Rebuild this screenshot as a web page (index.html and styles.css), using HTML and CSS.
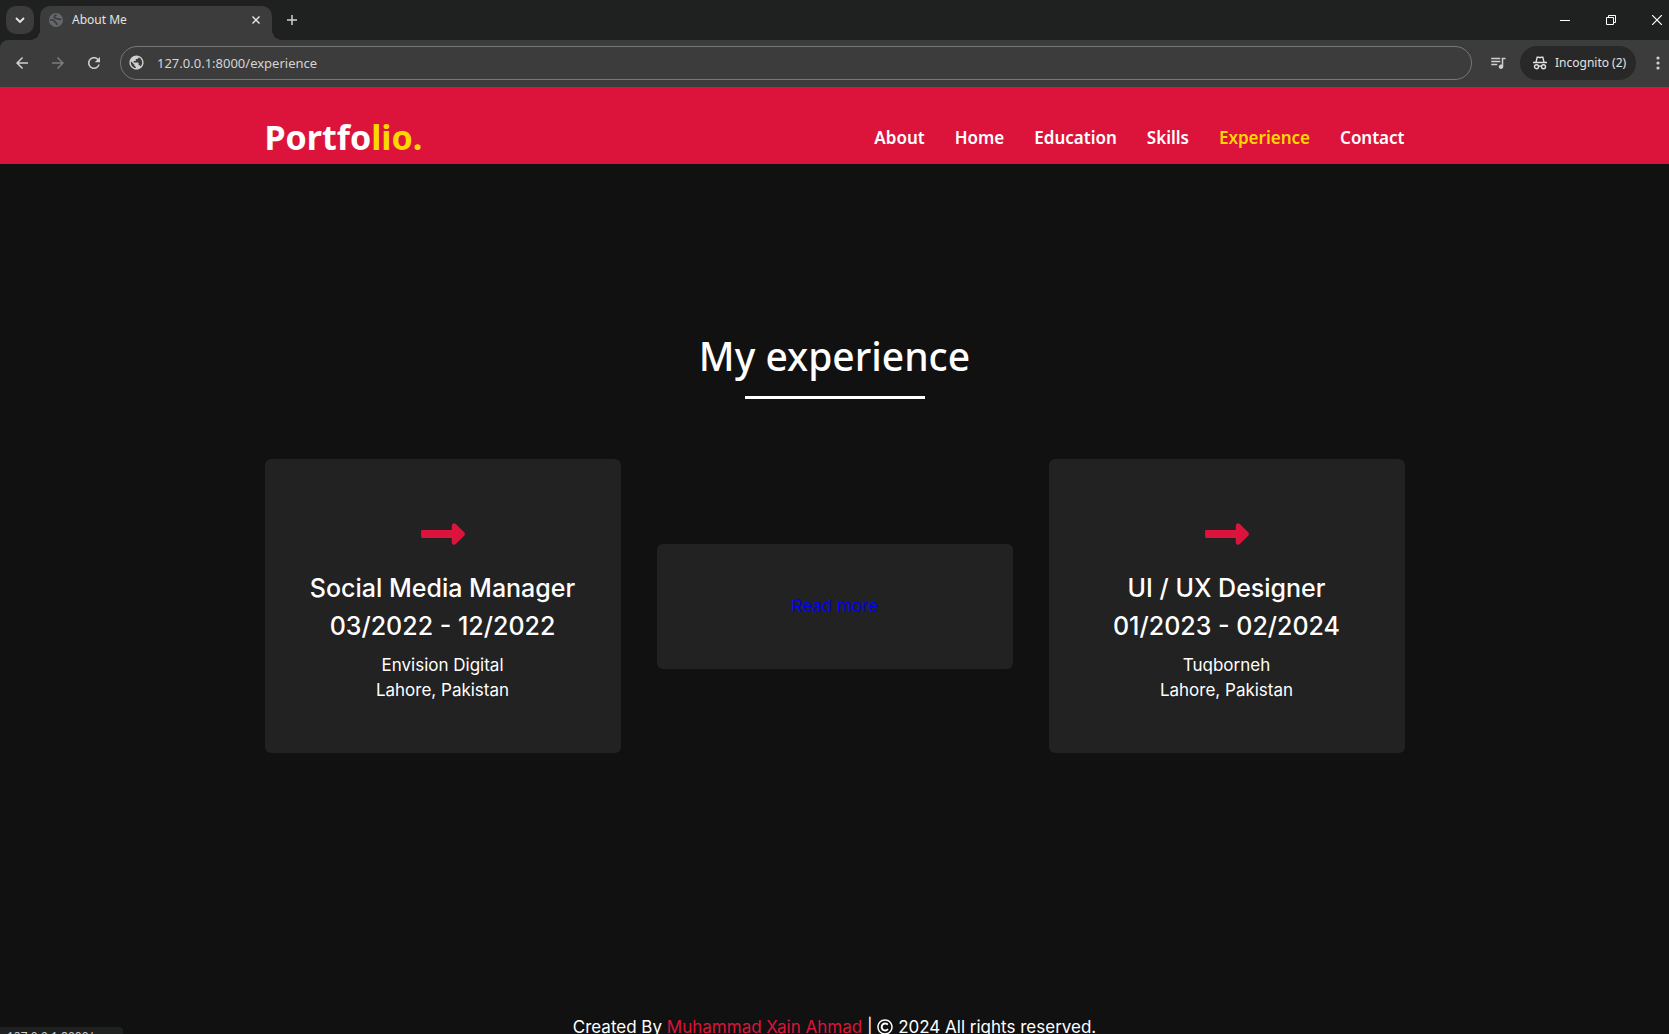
FILE: index.html
```html
<!DOCTYPE html>
<html lang="en">
<head>
<meta charset="utf-8">
<meta name="viewport" content="width=device-width, initial-scale=1">
<title>About Me</title>
<link rel="stylesheet" href="styles.css">
</head>
<body>
<div class="browser">
  <div class="tab-strip">
    <button class="tab-search" type="button" aria-label="Search tabs">
      <svg width="12" height="12" viewBox="0 0 12 12"><path d="M2 4l4 4 4-4" fill="none" stroke="#e8e8e8" stroke-width="1.800"/></svg>
    </button>
    <div class="tab">
      <svg width="14" height="14" viewBox="0 0 14 14"><circle cx="7" cy="7" r="7" fill="#64676c"/><path d="M7.500 1.800C4.500 2.500 4.500 5 7 5.500s4.500.2 5.200 1.300M1.200 7.200c2.300-.4 4.300 0 4.600 1.500s2.200.8 2.200 3.200" fill="none" stroke="#3c3c3c" stroke-width="1.700"/></svg>
      <span class="tab-title">About Me</span>
      <button class="icon-button tab-close" type="button" aria-label="Close tab">
        <svg width="8" height="8" viewBox="0 0 8 8"><path d="M.5.500l7 7M7.500.500l-7 7" stroke="#e8e8e8" stroke-width="1.400"/></svg>
      </button>
    </div>
    <button class="icon-button new-tab" type="button" aria-label="New tab">
      <svg width="10" height="10" viewBox="0 0 10 10"><path d="M5 0v10M0 5h10" stroke="#d0d0d0" stroke-width="1.500"/></svg>
    </button>
    <div class="window-buttons">
      <button class="icon-button" type="button" aria-label="Minimize"><svg width="10" height="10" viewBox="0 0 10 10"><path d="M0 5.500h10" stroke="#fff"/></svg></button>
      <button class="icon-button" type="button" aria-label="Restore"><svg width="10" height="10" viewBox="0 0 10 10"><path d="M.5 2.500h7v7h-7zM2.500 2.500v-2h7v7h-2" fill="none" stroke="#fff"/></svg></button>
      <button class="icon-button" type="button" aria-label="Close"><svg width="10" height="10" viewBox="0 0 10 10"><path d="M0 0l10 10M10 0L0 10" stroke="#fff" stroke-width="1.200"/></svg></button>
    </div>
  </div>
  <div class="toolbar">
    <div class="nav-buttons">
      <button class="icon-button" type="button" aria-label="Back"><svg width="18" height="18" viewBox="0 0 24 24"><path fill="#d0d0d0" d="M20 11H7.830l5.590-5.590L12 4l-8 8 8 8 1.410-1.410L7.830 13H20v-2z"/></svg></button>
      <button class="icon-button" type="button" aria-label="Forward"><svg width="18" height="18" viewBox="0 0 24 24"><path fill="#7c7c7c" d="M4 11h12.170l-5.590-5.590L12 4l8 8-8 8-1.410-1.410L16.170 13H4v-2z"/></svg></button>
      <button class="icon-button" type="button" aria-label="Reload"><svg width="18" height="18" viewBox="0 0 24 24"><path fill="#d0d0d0" d="M17.650 6.350C16.200 4.900 14.210 4 12 4c-4.420 0-7.990 3.580-7.990 8s3.570 8 7.990 8c3.730 0 6.840-2.550 7.730-6h-2.080c-.82 2.330-3.040 4-5.650 4-3.310 0-6-2.690-6-6s2.690-6 6-6c1.660 0 3.140.69 4.220 1.780L13 11h7V4l-2.350 2.350z"/></svg></button>
    </div>
    <label class="address">
      <svg width="17" height="17" viewBox="0 0 24 24"><path fill="#d0d0d0" d="M12 2C6.480 2 2 6.480 2 12s4.480 10 10 10 10-4.480 10-10S17.520 2 12 2zm-1 17.930c-3.950-.49-7-3.850-7-7.930 0-.62.08-1.210.21-1.790L9 15v1c0 1.100.9 2 2 2v1.930zm6.900-2.540c-.26-.81-1-1.390-1.900-1.390h-1v-3c0-.55-.45-1-1-1H8v-2h2c.55 0 1-.45 1-1V7h2c1.100 0 2-.9 2-2v-.41c2.930 1.190 5 4.060 5 7.410 0 2.080-.8 3.970-2.100 5.390z"/></svg>
      <input type="text" value="127.0.0.1:8000/experience" aria-label="Address">
    </label>
    <button class="icon-button media" type="button" aria-label="Media controls"><svg width="18" height="18" viewBox="0 0 24 24"><path fill="#d0d0d0" d="M15 5H3v2h12V5zm0 4H3v2h12V9zM3 15h8v-2H3v2zM17 5v9.180c-.31-.11-.65-.18-1-.18-1.660 0-3 1.340-3 3s1.340 3 3 3 3-1.340 3-3V7h3V5h-5z"/></svg></button>
    <button class="incognito" type="button">
      <svg width="14" height="14" viewBox="0 0 14 14" fill="none" stroke="#e0e0e0" stroke-width="1.400"><path d="M0 6.500h14M3 6.200l1.200-5h1.500l1.300.5 1.300-.5h1.500l1.200 5"/><circle cx="3.500" cy="10.700" r="2"/><circle cx="10.500" cy="10.700" r="2"/><path d="M5.500 10.300q1.500-.8 3 0"/></svg>
      <span>Incognito (2)</span>
    </button>
    <button class="icon-button menu" type="button" aria-label="Menu"><svg width="4" height="14" viewBox="0 0 4 14" fill="#d0d0d0"><circle cx="2" cy="2" r="1.600"/><circle cx="2" cy="7" r="1.600"/><circle cx="2" cy="12" r="1.600"/></svg></button>
  </div>
</div>

<header class="navbar">
  <div class="container navbar-row">
    <a class="logo" href="#">Portfo<span>lio.</span></a>
    <nav>
      <ul class="menu-list">
        <li><a href="#">About</a></li>
        <li><a href="#">Home</a></li>
        <li><a href="#">Education</a></li>
        <li><a href="#">Skills</a></li>
        <li><a class="active" href="#">Experience</a></li>
        <li><a href="#">Contact</a></li>
      </ul>
    </nav>
  </div>
</header>

<main class="experience">
  <div class="container">
    <h1 class="title">My experience</h1>
    <div class="cards">
      <article class="card">
        <svg class="arrow" width="44" height="50" viewBox="0 0 448 512"><path d="M313.941 216H12c-6.627 0-12 5.373-12 12v56c0 6.627 5.373 12 12 12h301.941v46.059c0 21.382 25.851 32.090 40.971 16.971l86.059-86.059c9.373-9.373 9.373-24.569 0-33.941l-86.059-86.059c-15.119-15.119-40.971-4.411-40.971 16.971V216z"/></svg>
        <h2>Social Media Manager<br>03/2022 - 12/2022</h2>
        <p>Envision Digital<br>Lahore, Pakistan</p>
      </article>
      <article class="card">
        <a class="read-more" href="#">Read more</a>
      </article>
      <article class="card">
        <svg class="arrow" width="44" height="50" viewBox="0 0 448 512"><path d="M313.941 216H12c-6.627 0-12 5.373-12 12v56c0 6.627 5.373 12 12 12h301.941v46.059c0 21.382 25.851 32.090 40.971 16.971l86.059-86.059c9.373-9.373 9.373-24.569 0-33.941l-86.059-86.059c-15.119-15.119-40.971-4.411-40.971 16.971V216z"/></svg>
        <h2>UI / UX Designer<br>01/2023 - 02/2024</h2>
        <p>Tuqborneh<br>Lahore, Pakistan</p>
      </article>
    </div>
  </div>
</main>

<footer class="footer">Created By <a href="#">Muhammad Xain Ahmad</a> | <svg class="copyright" width="16" height="16" viewBox="0 0 512 512"><path d="M256 8C119.033 8 8 119.033 8 256s111.033 248 248 248 248-111.033 248-248S392.967 8 256 8zm0 448c-110.532 0-200-89.451-200-200 0-110.531 89.451-200 200-200 110.532 0 200 89.451 200 200 0 110.532-89.451 200-200 200zm107.351-101.064c-9.614 9.712-45.530 41.396-104.065 41.396-82.430 0-140.484-61.425-140.484-141.567 0-79.152 60.275-139.401 139.762-139.401 55.531 0 88.738 26.620 97.593 34.779a11.965 11.965 0 0 1 1.936 15.322l-18.155 28.113c-3.841 5.950-11.966 7.282-17.499 2.921-8.595-6.776-31.814-22.538-61.708-22.538-48.303 0-77.916 35.330-77.916 80.082 0 41.589 26.888 83.692 78.277 83.692 32.657 0 56.843-19.039 65.726-27.225 5.270-4.857 13.596-4.039 17.820 1.738l19.865 27.170a11.947 11.947 0 0 1-1.152 15.518z"/></svg> 2024 All rights reserved.</footer>

<div class="status-bubble">127.0.0.1:8000/</div>
</body>
</html>
```
FILE: styles.css
```css
* {
  box-sizing: border-box;
  margin: 0;
  padding: 0;
}

body {
  position: relative;
  height: 100vh;
  overflow: hidden;
  background: #111;
  color: #fff;
  font: 17px/25px Inter, sans-serif;
}

a {
  text-decoration: none;
}

button {
  border: 0;
  background: none;
  color: inherit;
  font: inherit;
}

svg {
  flex: none;
}

/* Browser frame */
.browser {
  font: 13px/20px "Noto Sans", sans-serif;
  color: #e3e3e3;
  background: #1f2120;
}

.tab-strip {
  display: flex;
  align-items: center;
  height: 40px;
  padding-left: 6px;
}

.icon-button {
  display: grid;
  place-items: center;
  flex: none;
}

.tab-search {
  display: grid;
  place-items: center;
  width: 28px;
  height: 28px;
  border-radius: 10px;
  background: #3c3c3c;
}

.tab {
  position: relative;
  display: flex;
  align-items: center;
  gap: 9px;
  align-self: flex-end;
  width: 232px;
  height: 34px;
  margin-left: 6px;
  padding: 0 12px 6px 9px;
  border-radius: 10px 10px 0 0;
  background: #3c3c3c;
}

.tab::before,
.tab::after {
  content: "";
  position: absolute;
  bottom: 0;
  width: 10px;
  height: 10px;
}

.tab::before {
  right: 100%;
  background: radial-gradient(circle at 0 0, transparent 10px, #3c3c3c 10px);
}

.tab::after {
  left: 100%;
  background: radial-gradient(circle at 100% 0, transparent 10px, #3c3c3c 10px);
}

.tab-title {
  flex: 1;
  font-size: 12px;
}

.new-tab {
  width: 28px;
  height: 28px;
  margin-left: 6px;
}

.window-buttons {
  display: flex;
  margin-left: auto;
  margin-right: -11px;
}

.window-buttons .icon-button {
  width: 46px;
  height: 40px;
}

.toolbar {
  display: flex;
  align-items: center;
  height: 47px;
  padding: 0 0 2px 4px;
  border-radius: 8px 0 0 0;
  background: #3c3c3c;
}

.nav-buttons {
  display: flex;
}

.nav-buttons .icon-button {
  width: 36px;
  height: 36px;
}

.address {
  display: flex;
  flex: 1;
  align-items: center;
  gap: 11px;
  height: 34px;
  margin-left: 8px;
  padding: 0 7px;
  border: 1px solid #777;
  border-radius: 17px;
}

.address input {
  flex: 1;
  min-width: 0;
  padding: 0 1px;
  border: 0;
  outline: 0;
  background: none;
  color: #d5d5d5;
  font: 13px/20px "Noto Sans", sans-serif;
}

.media {
  width: 48px;
  height: 34px;
  padding-left: 4px;
}

.incognito {
  display: flex;
  align-items: center;
  gap: 8px;
  width: 116px;
  height: 34px;
  padding-left: 13px;
  border-radius: 17px;
  background: #282828;
  font-size: 12px;
  white-space: nowrap;
}

.menu {
  width: 22px;
  height: 34px;
  margin-left: 11px;
}

/* Page */
.container {
  width: 100%;
  max-width: 1140px;
  margin: 0 auto;
}

.navbar {
  padding-top: 30px;
  padding-bottom: 7px;
  background: crimson;
  font-family: "Noto Sans", sans-serif;
}

.navbar-row {
  display: flex;
  align-items: center;
  justify-content: space-between;
}

.logo {
  color: #fff;
  font-size: 34px;
  font-weight: 700;
  line-height: 40px;
}

.logo span,
.menu-list .active {
  color: gold;
}

.menu-list {
  display: flex;
  gap: 30px;
  list-style: none;
}

.menu-list a {
  color: #fff;
  font-size: 17px;
  font-weight: 600;
}

.experience {
  padding: 162px 0 247px;
}

.title {
  margin-bottom: 60px;
  font: 500 39px/60px "Noto Sans", sans-serif;
  text-align: center;
}

.title::after {
  content: "";
  display: block;
  width: 180px;
  height: 3px;
  margin: 10px auto 0;
  background: #fff;
}

.cards {
  display: grid;
  grid-template-columns: repeat(3, 1fr);
  gap: 36px;
  align-items: center;
}

.card {
  padding: 50px 25px;
  border-radius: 6px;
  background: #222;
  text-align: center;
}

.arrow {
  display: block;
  margin: 0 auto 10px;
  fill: crimson;
}

.card h2 {
  margin-bottom: 8px;
  font-size: 25px;
  font-weight: 500;
  line-height: 38px;
}

.read-more {
  color: #00f;
}

.footer {
  padding: 15px 20px;
  text-align: center;
}

.footer a {
  color: crimson;
}

.copyright {
  fill: #fff;
  vertical-align: -2px;
}

/* Link target preview, cut off by the window's lower edge */
.status-bubble {
  position: absolute;
  left: 0;
  top: calc(100% - 7px);
  width: 123px;
  padding: 2px 7px;
  border-radius: 0 4px 0 0;
  background: #1f2120;
  color: #d0d0d0;
  font: 12px/16px "Noto Sans", sans-serif;
}
```
